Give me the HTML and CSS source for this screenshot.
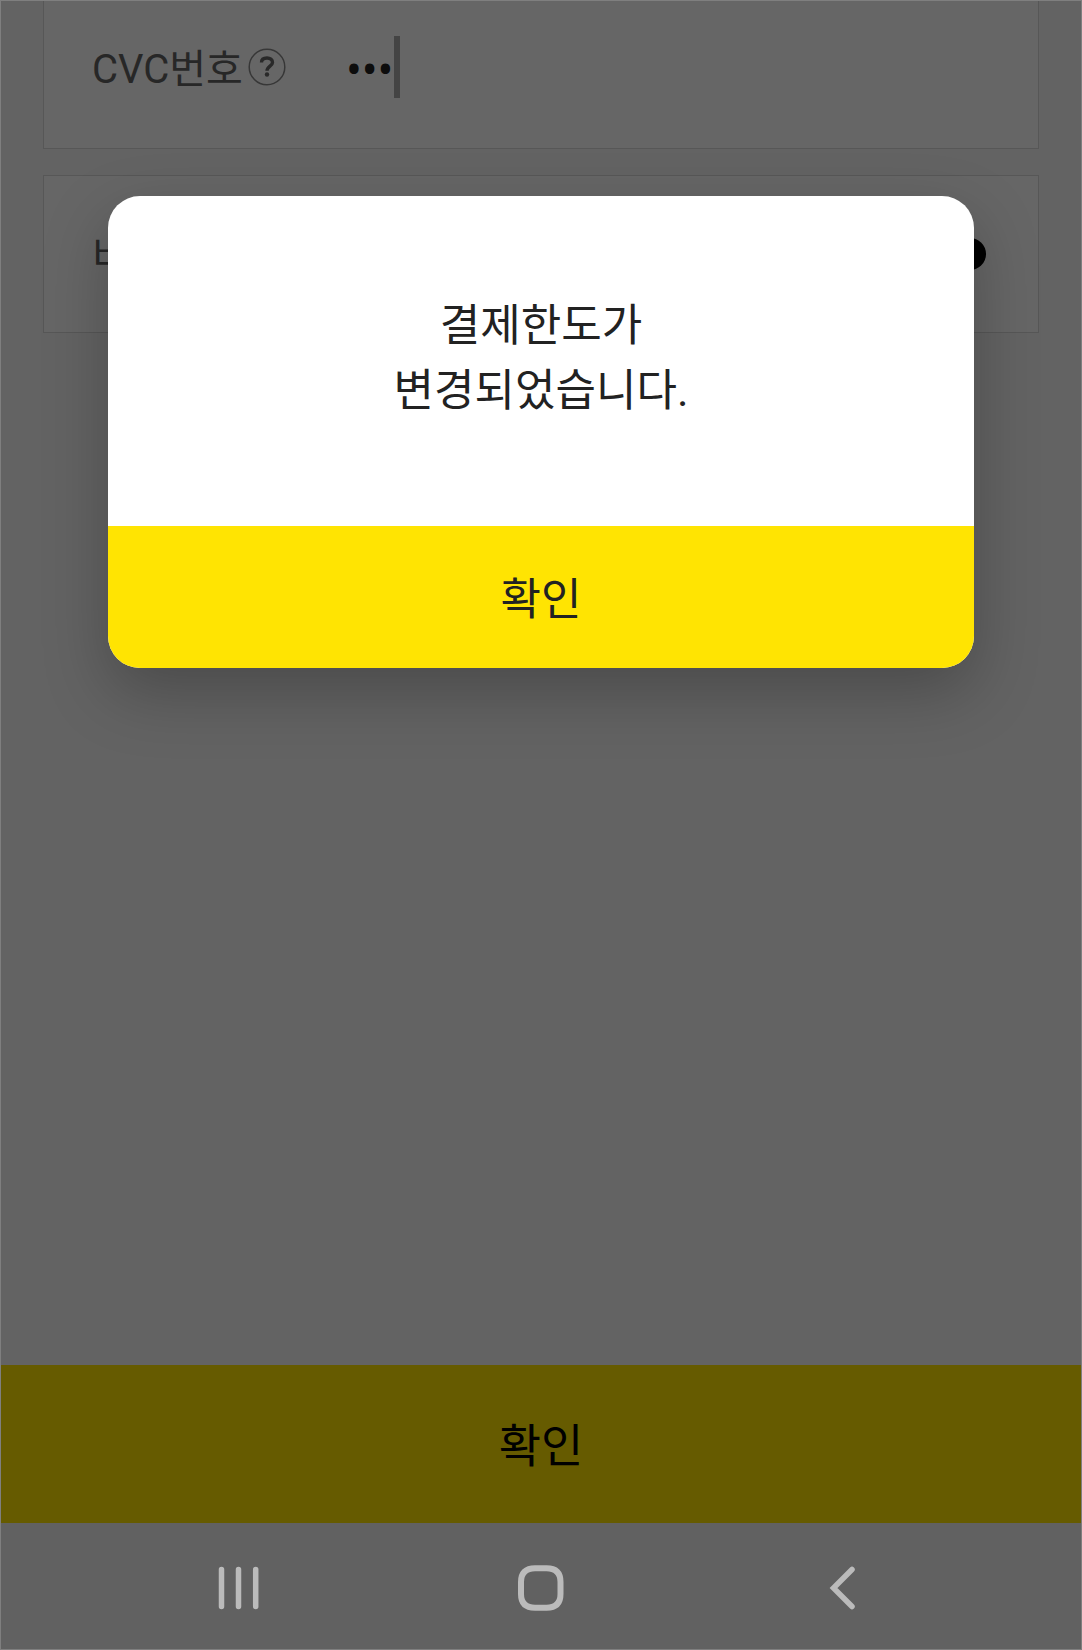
FILE: index.html
```html
<!DOCTYPE html>
<html lang="ko">
<head>
    <meta charset="UTF-8">
    <meta name="viewport" content="width=device-width, initial-scale=1.0">
    <title>결제한도 변경</title>
    <link rel="stylesheet" href="styles.css">
</head>
<body>

    <div class="screen">
        <main class="page">
            <form class="card-form">
                <div class="field field-cvc">
                    <label for="cvc">CVC번호</label>
                    <button type="button" class="help" aria-label="CVC번호 안내">
                        <svg width="38" height="38" viewBox="0 0 38 38" fill="none">
                            <circle cx="19" cy="19" r="17.800" stroke="#8a8a8a" stroke-width="1.500"/>
                            <path d="M13.500 14.500C13.500 11.500 15.800 10 19 10C22.200 10 24.500 11.700 24.500 14.400C24.500 18 19 18.200 19 22.700" stroke="#666" stroke-width="3.400"/>
                            <circle cx="19" cy="26.500" r="2.200" fill="#666"/>
                        </svg>
                    </button>
                    <input type="password" id="cvc" value="123" maxlength="3">
                    <span class="caret"></span>
                </div>
                <div class="field field-password">
                    <span class="label">비밀번호</span>
                    <span class="dot"></span>
                </div>
            </form>
            <button type="button" class="submit">확인</button>

            <div class="overlay">
                <div class="popup" role="alertdialog" aria-describedby="popupText">
                    <p id="popupText">결제한도가<br>변경되었습니다.</p>
                    <button type="button" class="popup-ok">확인</button>
                </div>
            </div>
        </main>

        <nav class="nav-bar">
            <button type="button" aria-label="최근 앱">
                <svg width="48" height="48" viewBox="0 0 48 48" fill="none" stroke="#bbb" stroke-width="5.500" stroke-linecap="round">
                    <path d="M6.500 5.500V42.500M23.500 5.500V42.500M40.700 5.500V42.500"/>
                </svg>
            </button>
            <button type="button" aria-label="홈">
                <svg width="48" height="48" viewBox="0 0 48 48" fill="none" stroke="#bbb" stroke-width="6">
                    <path d="M18 4.300H29.500Q43.500 4.300 43.500 18V30Q43.500 43.700 29.500 43.700H18Q4 43.700 4 30V18Q4 4.300 18 4.300Z"/>
                </svg>
            </button>
            <button type="button" aria-label="뒤로">
                <svg width="48" height="48" viewBox="0 0 48 48" fill="none" stroke="#bbb" stroke-width="5.500" stroke-linecap="round">
                    <path d="M33 5.500L14.500 24L33 42.500"/>
                </svg>
            </button>
        </nav>
    </div>

</body>
</html>
```
FILE: styles.css
```css
* { box-sizing: border-box; }
body {
    margin: 0;
    font-family: Roboto, "Noto Sans CJK KR", sans-serif;
}
button {
    border: none;
    padding: 0;
    background: none;
    font-family: inherit;
    cursor: pointer;
}
svg { display: block; }
.screen {
    min-height: 100vh;
    display: flex;
    flex-direction: column;
    border: 1px solid #7f7f7f;
}
.page {
    position: relative;
    flex: 1;
    display: flex;
    flex-direction: column;
    background: #f8f8f8;
}
.card-form {
    flex: 1;
    display: flex;
    flex-direction: column;
    gap: 26px;
    padding: 0 42px;
}
.field {
    display: flex;
    align-items: center;
    padding: 0 52px 0 48px;
    background: #fff;
    border: 1px solid #dadada;
    color: #636363;
    font-size: 40px;
    line-height: 56px;
}
.field-cvc {
    border-top: none;
    padding-top: 35px;
    padding-bottom: 50px;
}
.field-password {
    height: 158px;
    justify-content: space-between;
}
.field label,
.field .label {
    padding-top: 6px;
}
.help { margin-left: 5px; }
.field input {
    width: 48px;
    margin-left: 60px;
    padding: 0;
    border: none;
    outline: none;
    background: none;
    color: #222;
    font-family: "Noto Sans", sans-serif;
    font-size: 42px;
}
.caret {
    width: 6px;
    height: 62px;
    background: #aaa;
}
.dot {
    width: 32px;
    height: 32px;
    border-radius: 50%;
    background: #000;
}
.submit {
    height: 158px;
    padding-bottom: 4px;
    background: #ffe400;
    color: #000;
    font-size: 46px;
}

/* popup */
.overlay {
    position: absolute;
    inset: 0;
    padding: 195px calc(10% - 1px) 0;
    background: rgba(0, 0, 0, 0.6);
}
.popup {
    overflow: hidden;
    border-radius: 32px;
    background: #fff;
    box-shadow: 0 24px 64px rgba(0, 0, 0, 0.25);
    color: #222;
    font-size: 44px;
    text-align: center;
}
.popup p {
    margin: 0;
    padding: 98px 20px 102px;
    line-height: 65px;
}
.popup-ok {
    display: block;
    width: 100%;
    height: 142px;
    padding-bottom: 2px;
    background: #ffe402;
    color: #222;
    font-size: 44px;
}

/* bottom navigation */
.nav-bar {
    display: flex;
    justify-content: center;
    gap: 254px;
    padding: 41px 0 37px;
    background: #616161;
}
```
